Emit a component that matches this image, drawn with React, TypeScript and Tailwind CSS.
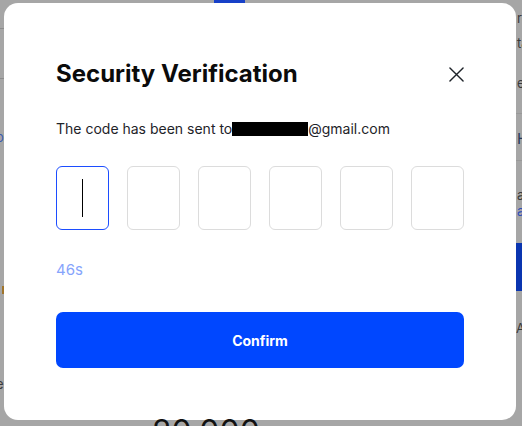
export default function App() {
  const cells = [0, 1, 2, 3, 4, 5];

  return (
    <div
      className="relative h-[426px] w-[522px] overflow-hidden bg-[#a6a6a6]"
      style={{ fontFamily: 'Inter, "Liberation Sans", sans-serif' }}
    >
      {/* page behind the overlay — only slivers show */}
      <div className="pointer-events-none absolute inset-0 text-[13px] text-[#3a3a3a]" aria-hidden="true">
        <div className="absolute left-0 top-[28px] h-px w-[4px] bg-[#8c8c8c]" />
        <div className="absolute left-0 top-[78px] h-px w-[4px] bg-[#8c8c8c]" />
        <span className="absolute left-[-4px] top-[128px] text-[#3b5bb0]">o</span>
        <span className="absolute left-[-4px] top-[375px]">e</span>
        <div className="absolute left-[2px] top-[286px] h-[8px] w-[2px] bg-[#a0742a]" />
        <div className="absolute left-[214px] top-0 h-[3px] w-[31px] bg-[#1740c8]" />
        <span className="absolute left-[517px] top-[9px]">ra</span>
        <span className="absolute left-[517px] top-[34px]">ta</span>
        <span className="absolute left-[517px] top-[74px]">e</span>
        <div className="absolute left-[516px] top-[113px] h-px w-[6px] bg-[#999]" />
        <span className="absolute left-[517px] top-[128px] text-[15px] text-[#283a5c]">H</span>
        <div className="absolute left-[516px] top-[160px] h-px w-[6px] bg-[#999]" />
        <span className="absolute left-[517px] top-[186px]">a</span>
        <span className="absolute left-[517px] top-[202px] text-[#2f4fb8]">a</span>
        <div className="absolute left-[516px] top-[243px] h-[48px] w-[6px] bg-[#0a35b0]" />
        <span className="absolute left-[516px] top-[319px]">A</span>
      </div>

      {/* modal */}
      <div className="absolute left-[4px] top-[3px] w-[512px] rounded-[14px] bg-white px-[52px] pb-[52px] pt-[57px]">
        <div className="flex items-center justify-between">
          <h2 className="text-[24px] font-bold leading-[28px] text-[#0b0b0b]">Security Verification</h2>
          <button className="-mr-[4px] flex h-[24px] w-[24px] items-center justify-center text-[#1e2329]">
            <svg width="15" height="15" viewBox="0 0 16 16" fill="none">
              <path d="M1 1L15 15M15 1L1 15" stroke="currentColor" strokeWidth="1.5" strokeLinecap="round" />
            </svg>
          </button>
        </div>

        <p className="mt-[31px] flex items-center text-[14px] leading-[20px] text-[#1e2329]">
          The code has been sent to
          <span className="inline-block h-[14px] w-[76px] bg-black" />
          @gmail.com
        </p>

        <div className="mt-[27px] grid grid-cols-6 gap-[18px]">
          {cells.map((i) => (
            <div
              key={i}
              className={`flex h-[64px] items-center justify-center rounded-[6px] border ${
                i === 0 ? 'border-[#1c4dff]' : 'border-[#dcdcdc]'
              }`}
            >
              {i === 0 && <div className="h-[38px] w-px bg-black" />}
            </div>
          ))}
        </div>

        <div className="mt-[30px] text-[15px] leading-[20px] text-[#86a4fc]">46s</div>

        <button className="mt-[32px] flex h-[56px] w-full items-center justify-center rounded-[7px] bg-[#0047ff] text-[14px] font-bold text-white">
          Confirm
        </button>
      </div>

      <span className="absolute left-[152px] top-[412px] text-[32px] leading-[40px] text-[#111]" aria-hidden="true">
        20,000
      </span>
    </div>
  );
}
